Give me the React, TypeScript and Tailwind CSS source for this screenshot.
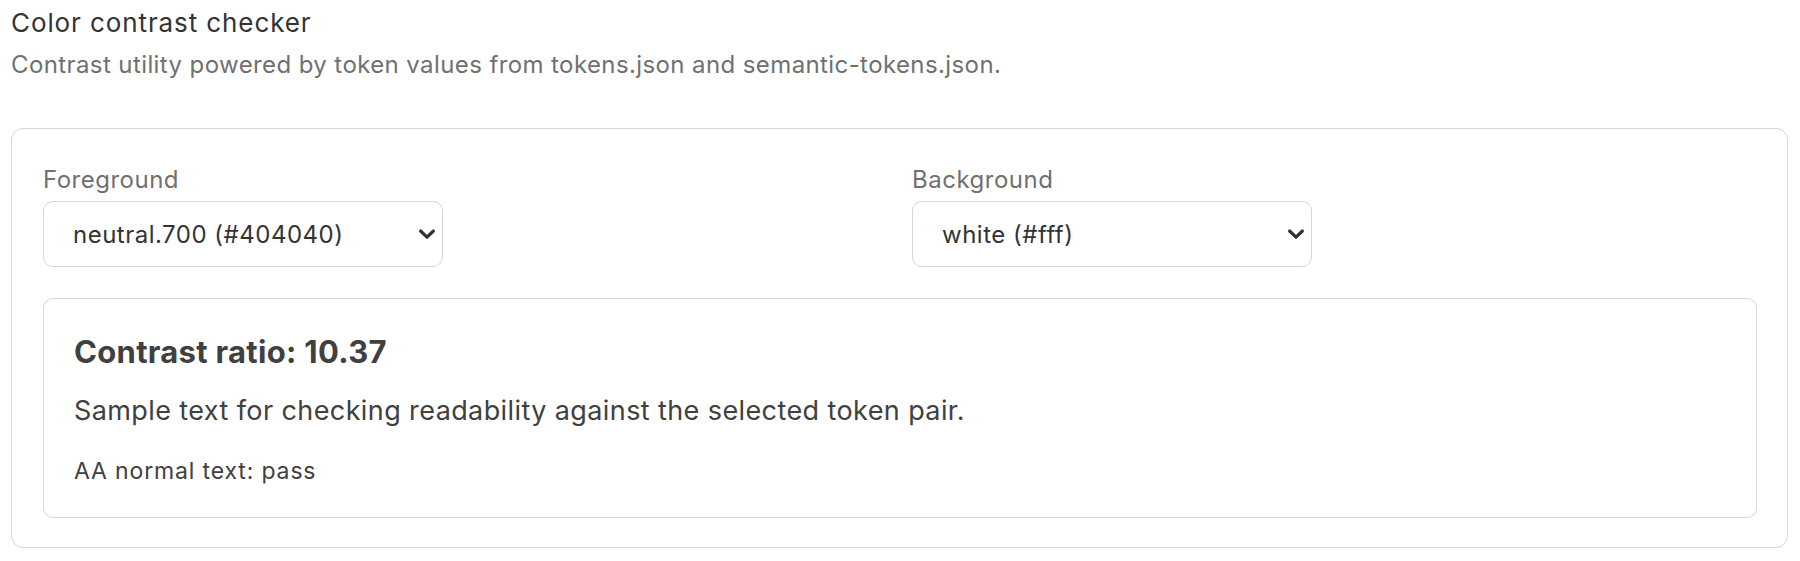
import React from "react";

function Chevron() {
  return (
    <svg width="18" height="12" viewBox="0 0 18 12" fill="none" className="shrink-0">
      <path d="M2.6 3L9 9.2L15.4 3" stroke="#333333" strokeWidth="3.2" strokeLinecap="round" strokeLinejoin="round" />
    </svg>
  );
}

function FakeSelect({ label, value }: { label: string; value: string }) {
  return (
    <div className="flex flex-col">
      <span className="text-[24px] leading-[29px] tracking-[0.5px] text-[#707070]">{label}</span>
      <div className="mt-[7px] flex h-[66px] w-[400px] items-center justify-between rounded-[10px] border border-[#d6d6d6] bg-white pl-[29px] pr-[6px]">
        <span className="text-[24px] leading-[29px] tracking-[0.5px] text-[#333333]">{value}</span>
        <Chevron />
      </div>
    </div>
  );
}

export default function App() {
  return (
    <div className="min-h-[561px] bg-white pl-[11px] pr-[12px] pt-[7px]" style={{ fontFamily: 'Inter, "Noto Sans", sans-serif' }}>
      <h1 className="text-[26px] font-normal leading-[31px] tracking-[0.9px] text-[#333333]">Color contrast checker</h1>
      <p className="mt-[12px] text-[24px] leading-[29px] tracking-[0.4px] text-[#707070]">
        Contrast utility powered by token values from tokens.json and semantic-tokens.json.
      </p>
      <div className="mt-[49px] rounded-[12px] border border-[#d6d6d6] pb-[29px] pl-[31px] pr-[30px] pt-[36px]">
        <div className="grid grid-cols-2 gap-x-6">
          <FakeSelect label="Foreground" value="neutral.700 (#404040)" />
          <FakeSelect label="Background" value="white (#fff)" />
        </div>
        <div className="mt-[31px] h-[220px] rounded-[10px] border border-[#d6d6d6] bg-white px-[30px] pt-[34px] text-[#404040]">
          <h2 className="text-[31px] font-bold leading-[38px] tracking-[0.3px]">Contrast ratio: 10.37</h2>
          <p className="mt-[23px] text-[27px] leading-[33px] tracking-[0.4px]">
            Sample text for checking readability against the selected token pair.
          </p>
          <p className="mt-[30px] text-[23px] leading-[28px] tracking-[0.85px]">AA normal text: pass</p>
        </div>
      </div>
    </div>
  );
}
